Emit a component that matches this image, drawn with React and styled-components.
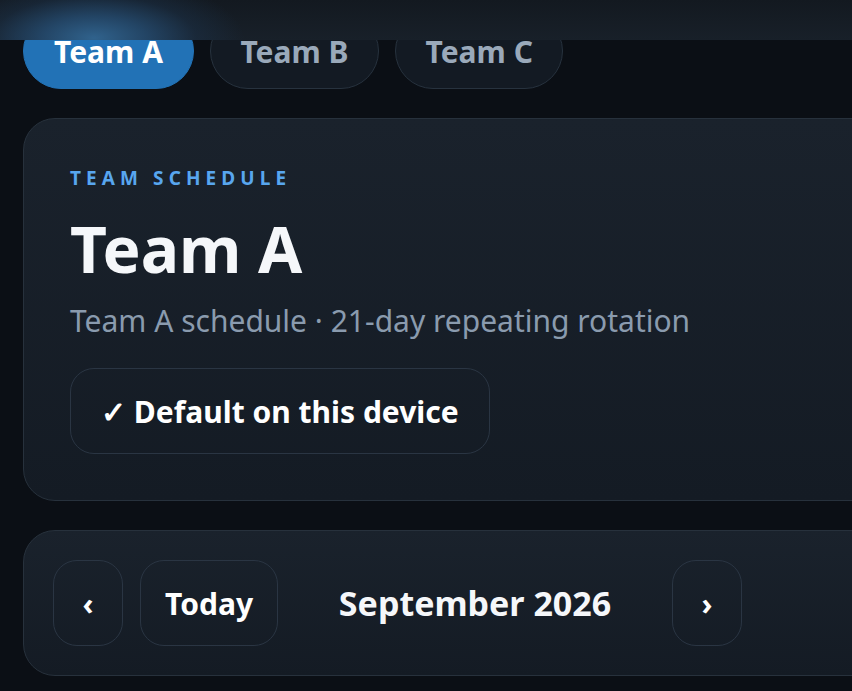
import React from "react";
import styled, { createGlobalStyle } from "styled-components";

const Global = createGlobalStyle`
  html, body { margin: 0; padding: 0; }
  body {
    background: #0b0f15;
    font-family: "Noto Sans", "Open Sans", sans-serif;
    color: #f4f7fb;
    overflow: hidden;
  }
  * { box-sizing: border-box; }
`;

const TopBar = styled.header`
  position: fixed;
  top: 0;
  left: 0;
  right: 0;
  height: 40px;
  background:
    radial-gradient(ellipse 150px 62px at 94px 38px,
      rgba(48, 98, 140, 1) 0%,
      rgba(38, 78, 116, 0.8) 35%,
      rgba(28, 52, 78, 0.45) 68%,
      rgba(22, 30, 40, 0) 100%),
    linear-gradient(180deg, #131920 0%, #182029 100%);
  z-index: 10;
`;

const Page = styled.main`
  width: 1100px;
  padding: 13px 23px 40px;
  display: flex;
  flex-direction: column;
  gap: 29px;
`;

const Tabs = styled.nav`
  display: flex;
  gap: 16px;
`;

const Tab = styled.button`
  height: 76px;
  padding: 0 ${(p) => (p.$active ? 30 : 29.5)}px;
  border-radius: 999px;
  font-family: inherit;
  font-size: 30px;
  font-weight: 700;
  border: 1px solid ${(p) => (p.$active ? "#2273b7" : "#27323e")};
  background: ${(p) => (p.$active ? "#2272b6" : "#131a23")};
  color: ${(p) => (p.$active ? "#ffffff" : "#9aa9ba")};
`;

const Card = styled.section`
  border: 1px solid #27313c;
  border-radius: 32px;
  background: linear-gradient(180deg, #1a222c 0%, #141b24 100%);
  padding: ${(p) => p.$pad};
`;

const Label = styled.div`
  font-size: 19px;
  line-height: 24px;
  font-weight: 700;
  letter-spacing: 5.1px;
  color: #58a6ef;
  text-transform: uppercase;
`;

const Heading = styled.h1`
  margin: 22px 0 0;
  font-size: 64px;
  line-height: 73px;
  font-weight: 700;
  color: #f5f7fa;
`;

const Sub = styled.p`
  margin: 15px 0 0;
  font-size: 30px;
  line-height: 42px;
  color: #8a9bae;
`;

const OutlineButton = styled.button`
  height: 86px;
  padding: 0 ${(p) => (p.$w ? 0 : p.$px || 30)}px;
  width: ${(p) => (p.$w ? `${p.$w}px` : "auto")};
  display: inline-flex;
  align-items: center;
  justify-content: center;
  border-radius: 24px;
  border: 1px solid #2a3543;
  background: transparent;
  color: #ffffff;
  font-family: inherit;
  font-size: 30px;
  font-weight: 700;
`;

const DefaultButton = styled(OutlineButton)`
  margin-top: 26px;
`;

const NavRow = styled.div`
  display: flex;
  align-items: center;
  gap: 17px;
`;

const Month = styled.h2`
  margin: 0;
  width: 360px;
  text-align: center;
  font-size: 34px;
  font-weight: 700;
  color: #f5f7fa;
`;

export default function App() {
  return (
    <>
      <Global />
      <TopBar />
      <Page>
        <Tabs>
          <Tab $active>Team A</Tab>
          <Tab>Team B</Tab>
          <Tab>Team C</Tab>
        </Tabs>
        <Card $pad="47px 46px 46px">
          <Label>Team Schedule</Label>
          <Heading>Team A</Heading>
          <Sub>Team A schedule · 21-day repeating rotation</Sub>
          <DefaultButton>✓ Default on this device</DefaultButton>
        </Card>
        <Card $pad="29px 29px">
          <NavRow>
            <OutlineButton $w={70}>‹</OutlineButton>
            <OutlineButton $px={24}>Today</OutlineButton>
            <Month>September 2026</Month>
            <OutlineButton $w={70}>›</OutlineButton>
          </NavRow>
        </Card>
      </Page>
    </>
  );
}
